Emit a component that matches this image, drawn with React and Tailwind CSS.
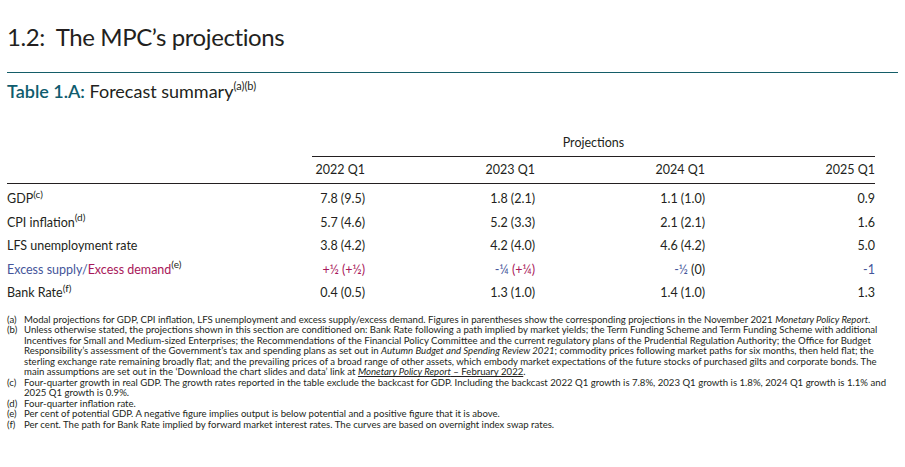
import React from "react";

const rows = [
  { label: <>GDP<Sup>(c)</Sup></>, vals: ["7.8 (9.5)", "1.8 (2.1)", "1.1 (1.0)", "0.9"] },
  { label: <>CPI inflation<Sup>(d)</Sup></>, vals: ["5.7 (4.6)", "5.2 (3.3)", "2.1 (2.1)", "1.6"] },
  { label: "LFS unemployment rate", vals: ["3.8 (4.2)", "4.2 (4.0)", "4.6 (4.2)", "5.0"] },
  {
    label: (
      <>
        <span className="text-[#44559a]">Excess supply/</span>
        <span className="text-[#a8175a]">Excess demand</span>
        <Sup>(e)</Sup>
      </>
    ),
    vals: [
      <span className="text-[#a8175a]">+½ (+½)</span>,
      <><span className="text-[#44559a]">-¼</span> <span className="text-[#a8175a]">(+¼)</span></>,
      <><span className="text-[#44559a]">-½</span> (0)</>,
      <span className="text-[#44559a]">-1</span>,
    ],
  },
  { label: <>Bank Rate<Sup>(f)</Sup></>, vals: ["0.4 (0.5)", "1.3 (1.0)", "1.4 (1.0)", "1.3"] },
];

function Sup({ children }) {
  return <sup className="text-[10px] top-[-0.55em]">{children}</sup>;
}

function Note({ tag, children }) {
  return (
    <div className="flex">
      <span className="w-[17px] shrink-0">{tag}</span>
      <div>{children}</div>
    </div>
  );
}

export default function App() {
  return (
    <div className="w-[905px] h-[467px] bg-white text-[#231f20] px-[7px] pt-[21px] font-['Lato',sans-serif] overflow-hidden">
      <h1 className="text-[24px] leading-[32px] tracking-[-0.4px] whitespace-pre">1.2:  The MPC’s projections</h1>
      <div className="mt-[19px] border-t-[1.5px] border-[#145d68] w-[891px]" />
      <h2 className="mt-[7px] text-[18px] leading-[22px]">
        <span className="text-[#0f5c6e] font-semibold">Table 1.A:</span> Forecast summary
        <sup className="text-[11px] top-[-0.7em]">(a)(b)</sup>
      </h2>

      <div className="w-[868px] mt-[29px] text-[12.5px]">
        <div className="ml-[305px] border-b-[1.5px] border-[#231f20] text-center leading-[24px] pb-[1px]">
          Projections
        </div>
        <div className="grid grid-cols-[188px_repeat(4,1fr)] border-b-[1.5px] border-[#231f20] leading-[26px]">
          <div />
          {["2022 Q1", "2023 Q1", "2024 Q1", "2025 Q1"].map((h) => (
            <div key={h} className="text-right">{h}</div>
          ))}
        </div>
        <div className="pt-[3px]">
          {rows.map((r, i) => (
            <div key={i} className="grid grid-cols-[188px_repeat(4,1fr)] leading-[23.5px]">
              <div className="whitespace-nowrap">{r.label}</div>
              {r.vals.map((v, j) => (
                <div key={j} className="text-right">{v}</div>
              ))}
            </div>
          ))}
        </div>
      </div>

      <div className="mt-[10px] text-[9.6px] leading-[10.55px] whitespace-nowrap">
        <Note tag="(a)">
          Modal projections for GDP, CPI inflation, LFS unemployment and excess supply/excess demand. Figures in parentheses show the corresponding projections in the November 2021 <i>Monetary Policy Report</i>.
        </Note>
        <Note tag="(b)">
          Unless otherwise stated, the projections shown in this section are conditioned on: Bank Rate following a path implied by market yields; the Term Funding Scheme and Term Funding Scheme with additional
          <br />
          Incentives for Small and Medium-sized Enterprises; the Recommendations of the Financial Policy Committee and the current regulatory plans of the Prudential Regulation Authority; the Office for Budget
          <br />
          Responsibility’s assessment of the Government’s tax and spending plans as set out in <i>Autumn Budget and Spending Review 2021</i>; commodity prices following market paths for six months, then held flat; the
          <br />
          sterling exchange rate remaining broadly flat; and the prevailing prices of a broad range of other assets, which embody market expectations of the future stocks of purchased gilts and corporate bonds. The
          <br />
          main assumptions are set out in the ‘Download the chart slides and data’ link at <span className="underline"><i>Monetary Policy Report</i> – February 2022</span>.
        </Note>
        <Note tag="(c)">
          Four-quarter growth in real GDP. The growth rates reported in the table exclude the backcast for GDP. Including the backcast 2022 Q1 growth is 7.8%, 2023 Q1 growth is 1.8%, 2024 Q1 growth is 1.1% and
          <br />
          2025 Q1 growth is 0.9%.
        </Note>
        <Note tag="(d)">Four-quarter inflation rate.</Note>
        <Note tag="(e)">Per cent of potential GDP. A negative figure implies output is below potential and a positive figure that it is above.</Note>
        <Note tag="(f)">Per cent. The path for Bank Rate implied by forward market interest rates. The curves are based on overnight index swap rates.</Note>
      </div>
    </div>
  );
}
